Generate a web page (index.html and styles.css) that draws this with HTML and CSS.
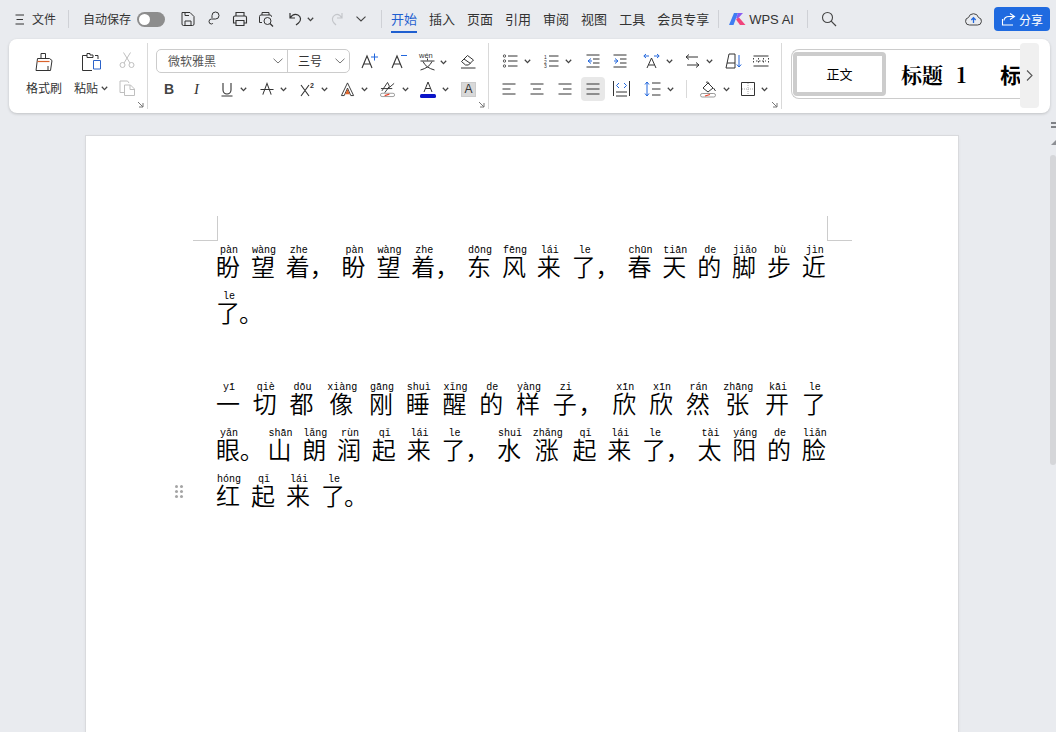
FILE: index.html
```html
<!DOCTYPE html>
<html lang="zh-CN">
<head>
<meta charset="utf-8">
<title>WPS 文字</title>
<link rel="stylesheet" href="styles.css">
</head>
<body>
<svg class="defs" width="0" height="0">
  <symbol id="caret" viewBox="0 0 7 5"><path d="M.8.8 3.5 3.6 6.2.8" fill="none" stroke="#444" stroke-width="1.3"/></symbol>
  <symbol id="corner" viewBox="0 0 7 7"><path d="M1 1 6 6M6 2V6H2" fill="none" stroke="#777"/></symbol>
</svg>
<header class="topbar">
  <svg class="tic menu" viewBox="0 0 10 11"><path d="M.5 1H9M1.5 5.5H8M.5 10H9" stroke="#333" fill="none"/></svg>
  <span class="tt file">文件</span>
  <i class="vr v1"></i>
  <span class="tt auto">自动保存</span>
  <span class="toggle"><b></b></span>
  <svg class="tic save" width="16" height="16" viewBox="0 0 16 16"><path d="M2 1.5H10L14 5.5V13A1.5 1.5 0 0 1 12.500 14.500H3.500A1.500 1.500 0 0 1 2 13ZM5 14.500V10H11V14.500M5 1.500V4.500H9" fill="none" stroke="#333"/></svg>
  <svg class="tic key" width="14" height="16" viewBox="0 0 14 16"><path d="M5 7V4.500A3.500 3.500 0 1 1 8.500 8H4.500A2.500 2.500 0 0 0 2 10.500 2.500 2.500 0 0 0 4.500 13 2 2 0 0 0 6 12" fill="none" stroke="#333"/></svg>
  <svg class="tic print" width="16" height="16" viewBox="0 0 16 16"><path d="M4 5V1.500H12V5M4 12H1.500V6.500A1.500 1.500 0 0 1 3 5H13A1.500 1.500 0 0 1 14.500 6.500V12H12M4 9.500H12V14.500H4Z" fill="none" stroke="#333" stroke-width="1.1"/></svg>
  <svg class="tic prev" width="17" height="16" viewBox="0 0 17 16"><path d="M4 4V1.500H11V4M4 11.500H1.500V5.500A1.500 1.500 0 0 1 3 4H12A1.500 1.500 0 0 1 13.500 5.500V6" fill="none" stroke="#333"/><circle cx="9.500" cy="10" r="3.500" fill="none" stroke="#333"/><path d="M12 12.500 15 15.500" stroke="#333" stroke-width="1.200"/></svg>
  <svg class="tic undo" width="15" height="14" viewBox="0 0 15 14"><path d="M2 1V6H7M2 6C4 3 7 1.500 10 3 13 4.500 13.500 8.500 10.500 11L8 13" fill="none" stroke="#333" stroke-width="1.200"/></svg>
  <svg class="caret cu"><use href="#caret"/></svg>
  <svg class="tic redo" width="13" height="14" viewBox="0 0 13 14"><path d="M12 1V6H7M12 6C10 3 7.500 1.500 5 3 2 4.500 1.500 8.500 4 11L6 13" fill="none" stroke="#c4c6ca" stroke-width="1.200"/></svg>
  <svg class="tic more" width="10" height="6" viewBox="0 0 10 6"><path d="M.5.700 5 5 9.500.700" fill="none" stroke="#444" stroke-width="1.100"/></svg>
  <i class="vr v2"></i>
  <nav class="tabs">
    <span class="tab active">开始</span><span class="tab">插入</span><span class="tab">页面</span><span class="tab">引用</span><span class="tab">审阅</span><span class="tab">视图</span><span class="tab">工具</span><span class="tab">会员专享</span>
  </nav>
  <i class="vr v3"></i>
  <svg class="tic logo" width="17" height="12" viewBox="0 0 17 12"><path d="M0 12 5 0H9L4.500 12Z" fill="#3f7df2"/><path d="M9 0H14L8 6.500 7.300 4.500Z" fill="#8a5cf0"/><path d="M7 6.500 10 4.500 16.500 12H11Z" fill="#f0447c"/></svg>
  <span class="ai">WPS AI</span>
  <i class="vr v4"></i>
  <svg class="tic find" width="16" height="16" viewBox="0 0 16 16"><circle cx="6.500" cy="6.500" r="5" fill="none" stroke="#444" stroke-width="1.100"/><path d="M10.200 10.200 15 15" stroke="#444" stroke-width="1.200"/></svg>
  <svg class="tic cloud" width="17" height="14" viewBox="0 0 17 14"><path d="M4.500 13A3.800 3.800 0 0 1 3.500 5.500 5.200 5.200 0 0 1 13.500 5.500 3.800 3.800 0 0 1 12.500 13Z" fill="none" stroke="#444"/><path d="M8.500 11V6M6.300 8 8.500 5.700 10.700 8" fill="none" stroke="#2267dd" stroke-width="1.300"/></svg>
  <button class="share"><svg width="15" height="14" viewBox="0 0 15 14"><path d="M9 1.500 13.500 4.500 9 7.500M13 4.500H8C4.500 4.500 3 6.500 3 8.500M1.500 7V13H12" fill="none" stroke="#fff" stroke-width="1.100"/></svg>分享</button>
</header>

<section class="ribbon">
  <div class="group g1">
    <div class="big brush">
      <svg width="20" height="20" viewBox="0 0 20 20"><path d="M7 6V1.500H11.500V6M3.500 6.500H15.500L18 8.500 16.500 18.500H2L3.500 6.500Z" fill="none" stroke="#333"/><path d="M3.500 9.500H15.500" stroke="#d9622b" stroke-width="1.200"/><path d="M14 18V14" stroke="#333"/></svg>
      <span class="lbl">格式刷</span>
    </div>
    <div class="big paste">
      <svg width="21" height="20" viewBox="0 0 21 20"><path d="M6 3.500H1.500V18.500H11M14 3.500H17V7M6 5.500V1.500H9V3H12V5.500Z" fill="none" stroke="#333"/><path d="M12.500 8.500H19.500V17H12.500Z" fill="#fff" stroke="#2b62c9"/></svg>
      <span class="lbl">粘贴<svg class="caret cp"><use href="#caret"/></svg></span>
    </div>
    <div class="mini">
      <svg width="16" height="16" viewBox="0 0 16 16"><path d="M4.500.500 11 11M11.500.500 5 11" stroke="#bfbfbf" fill="none"/><circle cx="3.500" cy="13" r="2.500" fill="none" stroke="#bfbfbf"/><circle cx="12.500" cy="13" r="2.500" fill="none" stroke="#bfbfbf"/></svg>
      <svg width="16" height="16" viewBox="0 0 16 16"><path d="M6 12.500H1V1H8.500L10 3" fill="none" stroke="#bfbfbf"/><path d="M5.500 5H11.500L15.500 9V15.500H5.500ZM11 5V9.500H15.500" fill="none" stroke="#bfbfbf"/></svg>
    </div>
    <svg class="corner"><use href="#corner"/></svg>
  </div>

  <div class="group g2">
    <div class="row r1">
      <div class="fontbox">
        <span class="fname">微软雅黑<svg class="chev" viewBox="0 0 10 6"><path d="M.5.700 5 5 9.500.700" fill="none" stroke="#777"/></svg></span>
        <span class="fsize">三号<svg class="chev" viewBox="0 0 10 6"><path d="M.5.700 5 5 9.500.700" fill="none" stroke="#777"/></svg></span>
      </div>
      <svg class="ib m11" width="18" height="16" viewBox="0 0 18 16"><path d="M1 15 6 3 11 15M2.700 11H9.300" fill="none" stroke="#333" stroke-width="1.100"/><path d="M10 4H17M13.500 .5V7.500" stroke="#2267dd" fill="none"/></svg>
      <svg class="ib m12" width="16" height="16" viewBox="0 0 16 16"><path d="M1 15 6 3 11 15M2.700 11H9.300" fill="none" stroke="#333" stroke-width="1.100"/><path d="M10 2.500H16" stroke="#2267dd"/></svg>
      <svg class="ib m12" width="17" height="19" viewBox="0 0 17 19"><text x="0" y="6" class="wen">wén</text><path d="M8.500 6.500V8.500M1.500 9H15.500M4 9.500C6 14 10 16.500 15.500 18M13 9.500C11 14 7 16.500 1.500 18" fill="none" stroke="#333"/></svg>
      <svg class="caret c3"><use href="#caret"/></svg>
      <svg class="ib eraser" width="16" height="15" viewBox="0 0 16 15"><path d="M5.500 11 1.500 7.500 7.500 1.500 13.500 6 8.500 11ZM4 5 10.500 9.500M1 14H15.500" fill="none" stroke="#333"/></svg>
    </div>
    <div class="row r2">
      <span class="gl bold">B</span>
      <span class="gl ital">I</span>
      <span class="tb"><svg width="14" height="16" viewBox="0 0 14 16"><path d="M3 2V9A4 4 0 0 0 11 9V2M1.500 15H12.500" fill="none" stroke="#333" stroke-width="1.100"/></svg><svg class="caret"><use href="#caret"/></svg></span>
      <span class="tb"><svg width="14" height="16" viewBox="0 0 15 16"><path d="M3 14 7.500 2 12 14M.5 8.500H14.500" fill="none" stroke="#333" stroke-width="1.100"/></svg><svg class="caret"><use href="#caret"/></svg></span>
      <span class="tb"><svg width="15" height="16" viewBox="0 0 15 16"><path d="M1 4 9 15M9 4 1 15" stroke="#333" fill="none" stroke-width="1.100"/><text x="10" y="7" class="sup">2</text></svg><svg class="caret"><use href="#caret"/></svg></span>
      <span class="tb"><svg width="15" height="16" viewBox="0 0 16 16"><path d="M1.500 15 8 1.500 14.500 15H11.500L8 7 4.500 15Z" fill="none" stroke="#333"/><path d="M5.500 13.500H10.500L8 8Z" fill="#e0662c"/></svg><svg class="caret"><use href="#caret"/></svg></span>
      <span class="tb"><svg width="16" height="17" viewBox="0 0 17 17"><path d="M2 10 8 1 10 5 5 12M1 7.500H13M8 8 15 2" fill="none" stroke="#333"/><rect x=".5" y="12.500" width="15" height="3.500" rx="1.700" fill="#fff" stroke="#999"/><path d="M5 15 10 13.500" stroke="#e8452c" stroke-width="1.300"/></svg><svg class="caret"><use href="#caret"/></svg></span>
      <span class="tb"><svg width="16" height="17" viewBox="0 0 16 17"><path d="M4 11 8 1 12 11M5.300 7.500H10.700" fill="none" stroke="#333"/><rect x="0" y="13" width="16" height="4" rx="1.500" fill="#0a14c8"/></svg><svg class="caret"><use href="#caret"/></svg></span>
      <span class="shade">A</span>
    </div>
    <svg class="corner"><use href="#corner"/></svg>
  </div>

  <div class="group g3">
    <div class="row r3">
      <span class="tb w41"><svg width="15" height="14" viewBox="0 0 15 14"><g fill="none" stroke="#555"><circle cx="1.500" cy="2" r="1.200"/><circle cx="1.500" cy="7" r="1.200"/><circle cx="1.500" cy="12" r="1.200"/></g><path d="M5 2H14.500M5 7H14.500M5 12H14.500" stroke="#333"/></svg><svg class="caret"><use href="#caret"/></svg></span>
      <span class="tb w42"><svg width="15" height="14" viewBox="0 0 15 14"><text x="0" y="4.500" class="num">1</text><text x="0" y="9.500" class="num">2</text><text x="0" y="14" class="num">3</text><path d="M5 2H14.500M5 7H14.500M5 12H14.500" stroke="#333"/></svg><svg class="caret"><use href="#caret"/></svg></span>
      <span class="tb w27"><svg width="14" height="14" viewBox="0 0 14 14"><path d="M.5 1H13.500M7 5H13.500M7 9H13.500M.5 13H13.500" stroke="#333"/><path d="M5 4.500 2 7 5 9.500M2 7H6" fill="none" stroke="#2267dd"/></svg></span>
      <span class="tb w30"><svg width="14" height="14" viewBox="0 0 14 14"><path d="M.5 1H13.500M7 5H13.500M7 9H13.500M.5 13H13.500" stroke="#333"/><path d="M2 4.500 5 7 2 9.500M1 7H5" fill="none" stroke="#2267dd"/></svg></span>
      <span class="tb w42"><svg width="17" height="16" viewBox="0 0 17 16"><path d="M4 15 8.500 5 13 15M5.500 12H11.500" fill="none" stroke="#333"/><path d="M1 3H6M3 1 .8 3 3 5M16 3H11M14 1 16.200 3 14 5" fill="none" stroke="#2267dd"/></svg><svg class="caret"><use href="#caret"/></svg></span>
      <span class="tb w40"><svg width="15" height="14" viewBox="0 0 15 14"><path d="M4 .5 1 3 4 5.500M1 3H13M11 8.500 14 11 11 13.500M2 11H14" fill="none" stroke="#333"/></svg><svg class="caret"><use href="#caret"/></svg></span>
      <span class="tb w28"><svg width="17" height="16" viewBox="0 0 17 16"><path d="M1 15 4 1H10V15ZM2 10H10" fill="none" stroke="#333"/><path d="M14 2V14M11.800 11.500 14 14 16.200 11.500" fill="none" stroke="#2267dd"/></svg></span>
      <span class="tb w16"><svg width="16" height="12" viewBox="0 0 16 12"><path d="M.5 1H15.500M.5 11H15.500" stroke="#333"/><path d="M.5 3V9M5.500 3V9M10.500 3V9M15.500 3V9M3 6H13" stroke="#444" stroke-dasharray="1.500 1.500" fill="none"/></svg></span>
    </div>
    <div class="row r4">
      <span class="tb w28"><svg width="14" height="12" viewBox="0 0 14 12"><path d="M.5 1H13.500M.5 6H8.500M.5 11H13.500" stroke="#333"/></svg></span>
      <span class="tb w28"><svg width="14" height="12" viewBox="0 0 14 12"><path d="M.5 1H13.500M3 6H11M.5 11H13.500" stroke="#333"/></svg></span>
      <span class="tb w28"><svg width="14" height="12" viewBox="0 0 14 12"><path d="M.5 1H13.500M5 6H13.500M.5 11H13.500" stroke="#333"/></svg></span>
      <span class="tb w27 on"><svg width="14" height="12" viewBox="0 0 14 12"><path d="M.5 1H13.500M.5 6H13.500M.5 11H13.500" stroke="#333"/></svg></span>
      <span class="tb w31"><svg width="17" height="16" viewBox="0 0 17 16"><path d="M.5 0V15M16.500 0V15M3 11H14M3 15H14" stroke="#333" fill="none"/><path d="M6 2 3.500 4.500 6 7M11 2 13.500 4.500 11 7" fill="none" stroke="#2267dd"/></svg></span>
      <span class="tb w42"><svg width="17" height="16" viewBox="0 0 17 16"><path d="M3 1V15M1 3.500 3 1 5 3.500M1 12.500 3 15 5 12.500" fill="none" stroke="#2267dd"/><path d="M8 2H16.500M8 8H16.500M8 14H16.500" stroke="#333"/></svg><svg class="caret"><use href="#caret"/></svg></span>
      <i class="vr v5"></i>
      <span class="tb w41"><svg width="17" height="17" viewBox="0 0 17 17"><path d="M3 7 8 2 13 7 8 11ZM6 1.500C7 .5 9 1 9 3" fill="none" stroke="#333"/><path d="M13.500 7 15.500 10" stroke="#333"/><rect x=".5" y="12.500" width="15" height="3.500" rx="1.700" fill="#fff" stroke="#999"/><path d="M5 15 10 13.500" stroke="#e8452c" stroke-width="1.300"/></svg><svg class="caret"><use href="#caret"/></svg></span>
      <span class="tb"><svg width="14" height="14" viewBox="0 0 14 14"><path d="M.5.500H13.500V13.500H.5Z" fill="none" stroke="#333"/><path d="M7 1V13M1 7H13" stroke="#aaa" stroke-dasharray="1 1"/></svg><svg class="caret"><use href="#caret"/></svg></span>
    </div>
    <svg class="corner"><use href="#corner"/></svg>
  </div>

  <div class="styles">
    <div class="gallery">
      <span class="normal">正文</span>
      <span class="h1">标题&nbsp;&nbsp;1</span>
      <span class="h2">标题</span>
    </div>
    <div class="scroller"><svg width="7" height="11" viewBox="0 0 7 11"><path d="M1 .5 6 5.500 1 10.500" fill="none" stroke="#555" stroke-width="1.100"/></svg></div>
  </div>
</section>

<main class="stage">
  <article class="page">
    <i class="mark tl"></i><i class="mark tr"></i>
    <span class="grip"></span>
    <div class="line"><span class="c"><rt>pàn</rt><b>盼</b></span><span class="c"><rt>wàng</rt><b>望</b></span><span class="c"><rt>zhe</rt><b>着</b></span><span class="c p"><rt></rt><b>，</b></span><span class="c"><rt>pàn</rt><b>盼</b></span><span class="c"><rt>wàng</rt><b>望</b></span><span class="c"><rt>zhe</rt><b>着</b></span><span class="c p"><rt></rt><b>，</b></span><span class="c"><rt>dōng</rt><b>东</b></span><span class="c"><rt>fēng</rt><b>风</b></span><span class="c"><rt>lái</rt><b>来</b></span><span class="c"><rt>le</rt><b>了</b></span><span class="c p"><rt></rt><b>，</b></span><span class="c"><rt>chūn</rt><b>春</b></span><span class="c"><rt>tiān</rt><b>天</b></span><span class="c"><rt>de</rt><b>的</b></span><span class="c"><rt>jiǎo</rt><b>脚</b></span><span class="c"><rt>bù</rt><b>步</b></span><span class="c"><rt>jìn</rt><b>近</b></span></div>
    <div class="line last"><span class="c"><rt>le</rt><b>了</b></span><span class="c p"><rt></rt><b>。</b></span></div>
    <div class="line para"><span class="c"><rt>yī</rt><b>一</b></span><span class="c"><rt>qiè</rt><b>切</b></span><span class="c"><rt>dōu</rt><b>都</b></span><span class="c"><rt>xiàng</rt><b>像</b></span><span class="c"><rt>gāng</rt><b>刚</b></span><span class="c"><rt>shuì</rt><b>睡</b></span><span class="c"><rt>xǐng</rt><b>醒</b></span><span class="c"><rt>de</rt><b>的</b></span><span class="c"><rt>yàng</rt><b>样</b></span><span class="c"><rt>zi</rt><b>子</b></span><span class="c p"><rt></rt><b>，</b></span><span class="c"><rt>xīn</rt><b>欣</b></span><span class="c"><rt>xīn</rt><b>欣</b></span><span class="c"><rt>rán</rt><b>然</b></span><span class="c"><rt>zhāng</rt><b>张</b></span><span class="c"><rt>kāi</rt><b>开</b></span><span class="c"><rt>le</rt><b>了</b></span></div>
    <div class="line"><span class="c"><rt>yǎn</rt><b>眼</b></span><span class="c p dot"><rt></rt><b>。</b></span><span class="c"><rt>shān</rt><b>山</b></span><span class="c"><rt>lǎng</rt><b>朗</b></span><span class="c"><rt>rùn</rt><b>润</b></span><span class="c"><rt>qǐ</rt><b>起</b></span><span class="c"><rt>lái</rt><b>来</b></span><span class="c"><rt>le</rt><b>了</b></span><span class="c p"><rt></rt><b>，</b></span><span class="c"><rt>shuǐ</rt><b>水</b></span><span class="c"><rt>zhǎng</rt><b>涨</b></span><span class="c"><rt>qǐ</rt><b>起</b></span><span class="c"><rt>lái</rt><b>来</b></span><span class="c"><rt>le</rt><b>了</b></span><span class="c p"><rt></rt><b>，</b></span><span class="c"><rt>tài</rt><b>太</b></span><span class="c"><rt>yáng</rt><b>阳</b></span><span class="c"><rt>de</rt><b>的</b></span><span class="c"><rt>liǎn</rt><b>脸</b></span></div>
    <div class="line last"><span class="c"><rt>hóng</rt><b>红</b></span><span class="c"><rt>qǐ</rt><b>起</b></span><span class="c"><rt>lái</rt><b>来</b></span><span class="c"><rt>le</rt><b>了</b></span><span class="c p"><rt></rt><b>。</b></span></div>
  </article>
  <i class="side s1"></i><i class="side s2"></i>
  <div class="scrollbar"></div>
</main>
</body>
</html>
```
FILE: styles.css
```css
* { box-sizing: border-box; }
html, body { margin: 0; height: 732px; overflow: hidden; }
body {
  background: #e9ebef;
  font-family: "Noto Sans CJK SC", "Noto Sans", sans-serif;
  color: #333;
  font-size: 12px;
}
.defs { position: absolute; }
svg { display: block; flex: none; overflow: visible; }
.caret { width: 7px; height: 5px; }

/* top bar */
.topbar { display: flex; align-items: center; height: 38px; padding-left: 15px; }
.tt { font-size: 12px; line-height: 16px; white-space: nowrap; }
.tic.menu { width: 10px; height: 11px; }
.file { margin-left: 7px; }
.vr { display: block; width: 1px; height: 18px; background: #cfd1d6; flex: none; }
.v1 { margin-left: 12px; }
.auto { margin-left: 14px; }
.toggle { width: 28px; height: 15px; border-radius: 8px; background: #8d8d8d; margin-left: 6px; padding: 2px; display: flex; }
.toggle b { width: 11px; height: 11px; border-radius: 50%; background: #fff; }
.save { margin-left: 15px; }
.key { margin-left: 11px; }
.print { margin-left: 11px; }
.prev { margin-left: 10px; }
.undo { margin-left: 13px; }
.cu { margin-left: 4px; }
.redo { margin-left: 16px; }
.more { margin-left: 13px; }
.v2 { margin-left: 15px; }
.tabs { display: flex; gap: 12px; margin-left: 9px; align-self: stretch; }
.tab { font-size: 13px; line-height: 38px; height: 33px; white-space: nowrap; color: #333; }
.tab.active { color: #1f5fd0; border-bottom: 2px solid #1f5fd0; }
.v3 { margin-left: 9px; }
.logo { margin-left: 10px; }
.ai { font-family: "Liberation Sans", sans-serif; font-size: 13px; margin-left: 3px; white-space: nowrap; }
.v4 { margin-left: 13px; }
.find { margin-left: 13px; }
.cloud { margin-left: auto; }
.share {
  display: flex; align-items: center; gap: 3px; justify-content: center;
  width: 56px; height: 24px; margin: 0 6px 0 12px; padding: 0;
  border: 0; border-radius: 4px; background: #1f6ae0; color: #fff;
  font: 12px "Noto Sans CJK SC", sans-serif;
}

/* ribbon */
.ribbon {
  display: flex; margin: 1px 6px 0 9px; height: 74px; background: #fff;
  border-radius: 8px; box-shadow: 0 1px 3px rgba(0,0,0,.18);
  padding-top: 4px;
}
.group { position: relative; height: 66px; border-right: 1px solid #d9d9d9; flex: none; }
.corner { position: absolute; width: 7px; height: 7px; right: 3px; bottom: 1px; }
.g1 { width: 139px; display: flex; padding: 9px 0 0 17px; }
.big { display: flex; flex-direction: column; align-items: center; }
.big .lbl { display: flex; align-items: center; font-size: 12px; line-height: 16px; margin-top: 8px; white-space: nowrap; }
.big.brush { width: 36px; }
.big.paste { width: 34px; margin-left: 12px; }
.cp { margin-left: 3px; }
.mini { display: flex; flex-direction: column; gap: 12px; margin-left: 11px; }
.g2 { width: 341px; padding: 6px 0 0 8px; }
.row { display: flex; align-items: center; }
.r1 { height: 24px; }
.r2 { height: 24px; margin-top: 4px; padding-left: 0; }
.fontbox { display: flex; width: 194px; height: 24px; border: 1px solid #ccc; border-radius: 5px; line-height: 22px; font-size: 12px; }
.fname { width: 131px; padding-left: 11px; border-right: 1px solid #ccc; display: flex; justify-content: space-between; align-items: center; padding-right: 4px; color: #555; }
.fsize { flex: 1; padding-left: 10px; padding-right: 4px; display: flex; justify-content: space-between; align-items: center; }
.chev { width: 10px; height: 6px; }
.m11 { margin-left: 11px; }
.m12 { margin-left: 12px; }
.c3 { margin-left: 4px; margin-top: 2px; }
.eraser { margin-left: 13px; }
.wen { font: 7.500px "Liberation Sans", sans-serif; fill: #333; }
.sup { font: bold 7px "Liberation Sans", sans-serif; fill: #333; }
.num { font: 5px "Liberation Sans", sans-serif; fill: #333; }
.gl { font-family: "Liberation Sans", sans-serif; font-size: 14px; width: 27px; text-align: center; line-height: 24px; }
.bold { font-weight: bold; margin-left: -1px; width: 28px; color: #444; }
.ital { font-family: "Liberation Serif", serif; font-style: italic; font-size: 15px; }
.tb { display: flex; align-items: center; width: 40px; height: 24px; gap: 6px; flex: none; }
.r2 .tb .caret { margin-left: auto; margin-right: 14px; }
.r2 .gl + .tb { margin-left: 10px; }
.shade {
  width: 15px; height: 15px; background: #d9d9d9; border: 1px solid #ccc;
  font: 12px/13px "Liberation Sans", sans-serif; text-align: center; margin-left: 1px;
}
.g3 { width: 293px; padding: 6px 0 0 14px; }
.r3 { height: 24px; }
.r4 { height: 24px; margin-top: 4px; margin-left: -1px; }
.w41 { width: 41px; }
.w42 { width: 42px; }
.w40 { width: 40px; }
.w27 { width: 27px; }
.w30 { width: 30px; }
.w28 { width: 28px; }
.w31 { width: 31px; }
.w16 { width: 16px; }
.on { position: relative; }
.on::before { content: ""; position: absolute; left: -5px; top: 0; width: 24px; height: 24px; background: #e8e8e8; border-radius: 4px; z-index: 0; }
.on svg { position: relative; z-index: 1; }
.v5 { height: 18px; margin-right: 13px; background: #d9d9d9; }

/* styles gallery */
.styles { display: flex; margin-left: 9px; }
.gallery {
  display: flex; align-items: center; width: 229px; height: 50px; margin-top: 6px;
  border: 1px solid #ccc; border-right: 0; border-radius: 8px 0 0 8px;
  overflow: hidden; padding-left: 1px; white-space: nowrap; color: #000;
}
.normal {
  flex: none; width: 93px; height: 44px; border: 4px solid #ccc; border-radius: 4px;
  font-size: 13px; line-height: 36px; text-align: center;
}
.h1 { font: bold 21px "Noto Serif CJK SC", "Noto Sans CJK SC", "Liberation Serif", serif; margin-left: 15px; flex: none; word-spacing: 1.500px; }
.h2 { font: bold 21px "Noto Sans CJK SC", serif; margin-left: 34px; flex: none; }
.scroller { width: 19px; height: 65px; background: #f0f0f0; border-radius: 4px; display: flex; align-items: center; justify-content: center; }

/* document */
.stage { padding: 23px 0 0 86px; position: relative; }
.page {
  position: relative; width: 872px; height: 640px; background: #fff;
  box-shadow: 0 0 0 1px #d9dadd, 0 1px 4px rgba(0,0,0,.08);
  padding: 107px 131px 0;
  color: #000;
}
.mark { position: absolute; width: 25px; height: 25px; top: 80px; border-bottom: 1px solid #ccc; }
.mark.tl { left: 107px; border-right: 1px solid #ccc; }
.mark.tr { left: 741px; border-left: 1px solid #ccc; }
.line { display: flex; justify-content: space-between; height: 46px; }
.line.last { justify-content: flex-start; gap: 11px; }
.line.para { margin-top: -1px; }
.line.last + .line.para { margin-top: 45px; }
.c { display: flex; flex-direction: column; align-items: center; min-width: 24px; flex: none; }
.c rt { display: block; font-family: "Liberation Mono", monospace; font-size: 10px; line-height: 11px; height: 11px; white-space: nowrap; color: #000; position: relative; top: 2px; }
.c b { display: block; font-weight: 350; font-size: 24px; line-height: 26px; height: 26px; width: 24px; text-align: center; position: relative; top: -1px; left: -1px; }
.c.p { width: 10px; min-width: 10px; align-items: flex-start; }
.c.p b { margin-left: -11px; }
.c.dot { width: 6px; min-width: 6px; }
.line.last .c.p { margin-left: -1px; }
.grip {
  position: absolute; left: 89px; top: 349px; width: 3px; height: 3px; border-radius: 50%;
  background: #a5a5a5; color: #a5a5a5;
  box-shadow: 5px 0 0, 0 5px 0, 5px 5px 0, 0 10px 0, 5px 10px 0;
}
.side { position: absolute; right: 0; width: 5px; background: #8d8f94; }
.s1 { top: 9px; height: 8px; background: repeating-linear-gradient(#7f8186 0 2px, transparent 2px 4px); }
.s2 { top: 27px; height: 5px; clip-path: polygon(0 100%, 100% 0, 100% 100%); }
.scrollbar { position: absolute; right: 0; top: 42px; width: 6px; height: 310px; background: #d5d6d9; border-radius: 3px; }
```
